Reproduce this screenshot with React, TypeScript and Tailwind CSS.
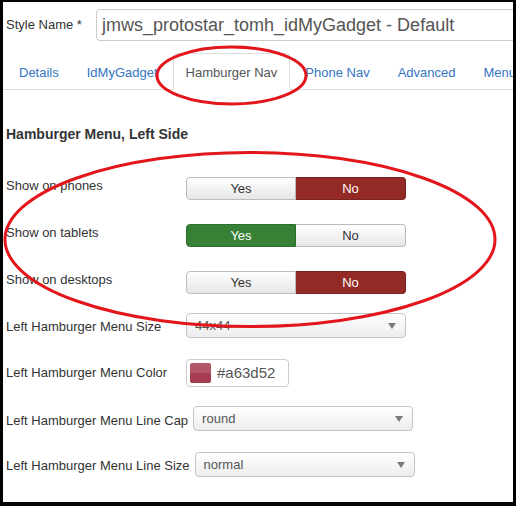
import React from "react";

const font = { fontFamily: '"Liberation Sans", Arial, sans-serif' };

function YesNo({ value }: { value: "yes-green" | "no-red" }) {
  const inactive =
    "bg-gradient-to-b from-white to-[#e6e6e6] text-[#333] border-[#bbb]";
  const yesCls =
    value === "yes-green"
      ? "bg-[#378137] text-white border-[#2f6e2f]"
      : inactive;
  const noCls =
    value === "no-red" ? "bg-[#942a25] text-white border-[#7c231f]" : inactive;
  return (
    <div className="flex shrink-0 mt-px w-[220px] h-[23px] text-[13px] leading-[21px]">
      <div
        className={`w-[110px] h-[23px] border rounded-l-[4px] text-center ${yesCls}`}
      >
        Yes
      </div>
      <div
        className={`w-[110px] h-[23px] border border-l-0 rounded-r-[4px] text-center ${noCls}`}
      >
        No
      </div>
    </div>
  );
}

function Select({ text, h }: { text: string; h: string }) {
  return (
    <div
      className={`relative shrink-0 w-[220px] ${h} border border-[#c4c4c4] rounded-[4px] bg-gradient-to-b from-white to-[#ededed] flex items-center pl-[8px] text-[13px] text-[#555]`}
    >
      <span>{text}</span>
      <svg
        className="absolute right-[9px] top-1/2 -translate-y-1/2"
        width="8"
        height="6"
        viewBox="0 0 8 6"
      >
        <path d="M0 0 L8 0 L4 6 Z" fill="#7a7a7a" />
      </svg>
    </div>
  );
}

function Label({ children, top }: { children: React.ReactNode; top: string }) {
  return (
    <div
      className={`shrink-0 min-w-[180px] pr-[5px] text-[13px] leading-[18px] text-[#333] whitespace-nowrap ${top}`}
    >
      {children}
    </div>
  );
}

export default function App() {
  const tabs = [
    "Details",
    "IdMyGadget",
    "Hamburger Nav",
    "Phone Nav",
    "Advanced",
    "Menu",
  ];
  return (
    <div className="w-[516px] h-[506px] bg-black pt-[2px] pl-[3px]" style={font}>
      <div className="relative w-[510px] h-[500px] bg-white overflow-hidden">
        {/* Style name */}
        <div className="flex items-center mt-[7px]">
          <div className="shrink-0 w-[93px] pl-[3px] text-[13px] text-[#333] whitespace-nowrap">
            Style Name *
          </div>
          <div className="w-[440px] h-[32px] shrink-0 border border-[#ccc] rounded-[4px] flex items-center pl-[5px] text-[18px] text-[#555] whitespace-nowrap">
            jmws_protostar_tomh_idMyGadget - Default
          </div>
        </div>

        {/* Tabs */}
        <ul className="flex mt-[12px] pl-[3px] border-b border-[#ddd] h-[37px] whitespace-nowrap">
          {tabs.map((t) => {
            const active = t === "Hamburger Nav";
            return (
              <li
                key={t}
                className={`shrink-0 mr-[2px] mb-[-1px] h-[37px] px-[12px] pt-[10px] pb-[7px] text-[13px] leading-[18px] border rounded-t-[4px] ${
                  active
                    ? "border-[#ddd] border-b-white bg-white text-[#555]"
                    : "border-transparent text-[#3475c2]"
                }`}
              >
                {t}
              </li>
            );
          })}
        </ul>

        {/* Header */}
        <div className="mt-[34px] pl-[3px] text-[14px] leading-[20px] font-bold text-[#333]">
          Hamburger Menu, Left Side
        </div>

        <div className="pl-[3px]">
          <div className="flex items-start mt-[32px]">
            <Label top="mt-px">Show on phones</Label>
            <YesNo value="no-red" />
          </div>
          <div className="flex items-start mt-[23px]">
            <Label top="mt-px">Show on tablets</Label>
            <YesNo value="yes-green" />
          </div>
          <div className="flex items-start mt-[23px]">
            <Label top="mt-px">Show on desktops</Label>
            <YesNo value="no-red" />
          </div>
          <div className="flex items-start mt-[19px]">
            <Label top="mt-[5px]">Left Hamburger Menu Size</Label>
            <Select text="44x44" h="h-[25px]" />
          </div>
          <div className="flex items-start mt-[21px]">
            <Label top="mt-[5px]">Left Hamburger Menu Color</Label>
            <div className="shrink-0 w-[103px] h-[28px] border border-[#ccc] rounded-[4px] flex items-center pl-[3px]">
              <div className="w-[21px] h-[20px] rounded-[2px] overflow-hidden flex flex-col">
                <div className="h-[10px] bg-[#b15766]" />
                <div className="h-[10px] bg-[#a63d52]" />
              </div>
              <span className="ml-[6px] text-[15px] text-[#555]">#a63d52</span>
            </div>
          </div>
          <div className="flex items-start mt-[19px]">
            <Label top="mt-[6px]">Left Hamburger Menu Line Cap</Label>
            <Select text="round" h="h-[25px]" />
          </div>
          <div className="flex items-start mt-[21px]">
            <Label top="mt-[5px]">Left Hamburger Menu Line Size</Label>
            <Select text="normal" h="h-[25px]" />
          </div>
        </div>

        {/* Annotation ellipses */}
        <svg
          className="absolute left-0 top-0 pointer-events-none"
          width="510"
          height="500"
          viewBox="0 0 510 500"
        >
          <g transform="translate(-3,-2)">
            <ellipse
              cx="231.5"
              cy="75.5"
              rx="74.5"
              ry="28.5"
              fill="none"
              stroke="#e3161c"
              strokeWidth="3"
            />
            <ellipse
              cx="250"
              cy="239.5"
              rx="245"
              ry="87"
              fill="none"
              stroke="#e3161c"
              strokeWidth="3"
            />
          </g>
        </svg>
      </div>
    </div>
  );
}
